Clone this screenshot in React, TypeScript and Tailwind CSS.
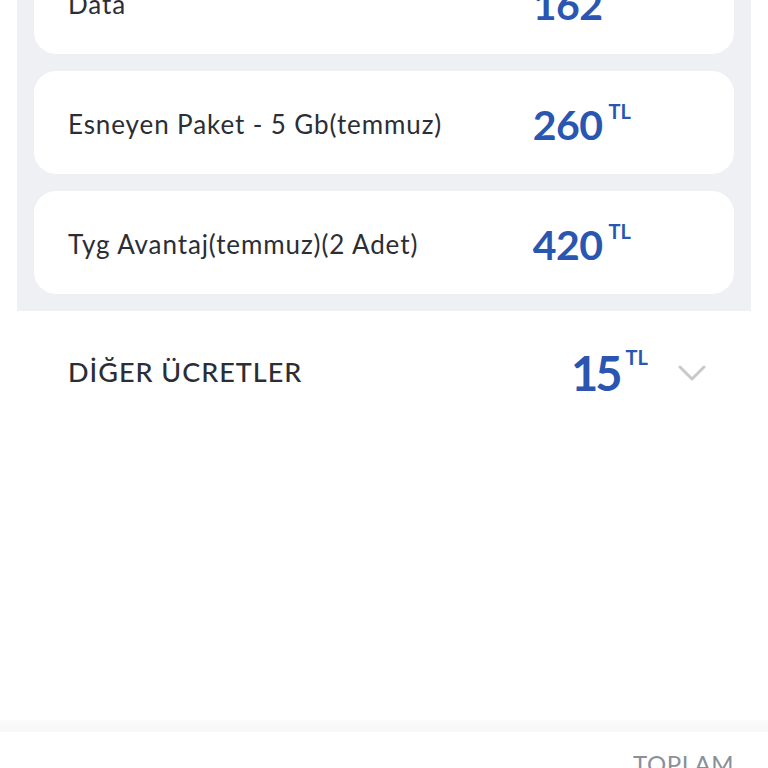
import React from 'react';

type Item = { label: string; amount: string };

const ITEMS: Item[] = [
  { label: 'Data', amount: '162' },
  { label: 'Esneyen Paket - 5 Gb(temmuz)', amount: '260' },
  { label: 'Tyg Avantaj(temmuz)(2 Adet)', amount: '420' },
];

// Price with the small superscript currency
const Price = ({ amount, big = false }: { amount: string; big?: boolean }) => (
  <div className="flex items-start text-[#2a56b1]">
    <span
      className={
        big
          ? 'text-[47px] font-bold leading-none tracking-[-3px]'
          : 'text-[41px] font-bold leading-none tracking-[-0.5px]'
      }
    >
      {amount}
    </span>
    <span className="ml-[6px] mt-[-3px] text-[20px] font-bold leading-none">TL</span>
  </div>
);

const App: React.FC = () => {
  return (
    <div
      className="h-[768px] overflow-hidden bg-white flex flex-col"
      style={{ fontFamily: 'Lato, "Noto Sans", sans-serif' }}
    >
      {/* Package list panel */}
      <div className="mx-[17px] mt-[-66px] bg-[#eef0f4] p-[17px] flex flex-col gap-[17px]">
        {ITEMS.map((item) => (
          <div
            key={item.label}
            className="h-[103px] rounded-[22px] bg-white flex items-center justify-between pl-[34px] pr-[103px]"
          >
            <span className="mt-[4px] text-[26px] text-[#2b2e34] tracking-[0.9px]">{item.label}</span>
            <div className="mt-[4px]">
              <Price amount={item.amount} />
            </div>
          </div>
        ))}
      </div>

      {/* Other charges */}
      <div className="h-[122px] flex items-center pl-[68px] pr-[62px]">
        <span className="text-[27px] text-[#2b2e36] tracking-[1px] font-medium">DİĞER ÜCRETLER</span>
        <div className="ml-auto mt-[2px]">
          <Price amount="15" big />
        </div>
        <svg className="ml-[30px] mt-[2px]" width="28" height="16" viewBox="0 0 28 16" fill="none">
          <path d="M2 2l12 12L26 2" stroke="#c9c9c9" strokeWidth="3" strokeLinecap="round" strokeLinejoin="round" />
        </svg>
      </div>

      <div className="flex-1" />

      {/* Footer */}
      <div className="h-[48px] shrink-0">
        <div className="h-[12px] bg-gradient-to-b from-[#fbfbfc] to-[#f6f7f8]" />
        <div className="flex justify-end pr-[34px] pt-[20px]">
          <span className="text-[24px] text-[#8a9099] tracking-[0.5px] leading-none">TOPLAM</span>
        </div>
      </div>
    </div>
  );
};

export default App;
